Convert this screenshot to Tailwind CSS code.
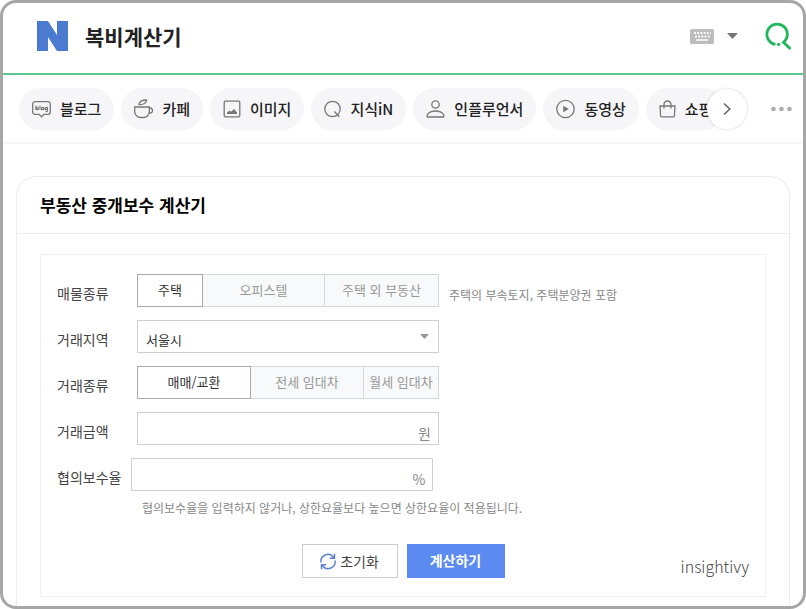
<!DOCTYPE html>
<html lang="ko">
<head>
    <meta charset="UTF-8">
    <meta name="viewport" content="width=device-width, initial-scale=1.0">
    <title>복비계산기</title>
    <script src="https://cdn.jsdelivr.net/npm/@tailwindcss/browser@4"></script>
</head>
<body class="bg-white font-['Noto_Sans_CJK_KR',sans-serif]">
    <div class="min-h-screen flex flex-col border-3 border-[#a6a6a6] rounded-2xl overflow-hidden">
        <!-- Search header -->
        <header class="flex items-center h-18 pb-1 pl-[34px] pr-[11px] border-b-2 border-[#5cc58c]">
            <svg class="w-[31px] h-[30px]" viewBox="0 0 31 30" fill="#4a7bd0" aria-hidden="true">
                <path d="M0 0h11l9 14V0h11v30H20L11 16v14H0z"/>
            </svg>
            <h1 class="ml-[17px] text-[21px] leading-8 font-bold text-[#222]">복비계산기</h1>
            <button type="button" aria-label="키보드" class="ml-auto">
                <svg class="w-6 h-[15px]" viewBox="0 0 24 15" aria-hidden="true">
                    <rect width="24" height="15" rx="1.5" fill="#bdbdbd"/>
                    <path d="M4 4h17M5 7.500h15" stroke="#fff" stroke-width="1.800" stroke-dasharray="1.800 1.400"/>
                    <path d="M6 11h12" stroke="#fff" stroke-width="1.600"/>
                </svg>
            </button>
            <button type="button" aria-label="자동완성 펼치기" class="ml-[13px]">
                <svg class="w-[11px] h-[6px]" viewBox="0 0 11 6" fill="#757575" aria-hidden="true"><path d="M0 0h11L5.500 6z"/></svg>
            </button>
            <button type="button" aria-label="검색" class="ml-[27px]">
                <svg class="w-[27px] h-7" viewBox="0 0 27 28" fill="none" stroke="#1fb75c" stroke-width="2.800" aria-hidden="true">
                    <path d="M10.500 22.400A10.200 10.200 0 1 1 18.500 20.300L25.500 27"/>
                    <circle cx="13.700" cy="22.400" r="1.600" fill="#1fb75c" stroke="none"/>
                </svg>
            </button>
        </header>

        <!-- Category tabs -->
        <nav class="flex items-center pt-[13px] pb-3 pl-4 pr-[11px] border-b-2 border-[#f8f8f8]">
            <div class="relative flex-1 min-w-0">
                <div class="flex gap-[7px] overflow-hidden mr-5 text-[15px] leading-[42px] font-medium text-[#222] whitespace-nowrap">
                    <a href="#" class="shrink-0 flex items-center gap-[9px] px-[13px] rounded-full bg-[#f6f6f9]">
                        <svg class="w-[19px] h-5" viewBox="0 0 19 20" fill="none" stroke="#777" stroke-width="1.300" aria-hidden="true">
                            <path d="M3 2.700h13a2.300 2.300 0 0 1 2.300 2.300v8a2.300 2.300 0 0 1-2.300 2.300h-4L9.500 17.800 7 15.300H3A2.300 2.300 0 0 1 .7 13V5A2.300 2.300 0 0 1 3 2.700z"/>
                            <path d="M4 6.500v4.500M8 6.500v4.500M15.500 8v4q-.5 1.200-2 .6" stroke-width="1.100"/>
                            <circle cx="5.200" cy="9.500" r="1.200"/><circle cx="10.700" cy="9.500" r="1.200"/><circle cx="14.300" cy="9.500" r="1.200"/>
                        </svg>
                        블로그
                    </a>
                    <a href="#" class="shrink-0 flex items-center gap-[9px] px-[13px] rounded-full bg-[#f6f6f9]">
                        <svg class="w-[19px] h-5" viewBox="0 0 19 20" fill="none" stroke="#777" stroke-width="1.300" aria-hidden="true">
                            <path d="M.7 8h14.600v4.500a6 6 0 0 1-6 6H6.700a6 6 0 0 1-6-6z"/>
                            <path d="M15.300 9h.7a2.300 2.300 0 0 1 0 5h-.9M5 5.500C5 2.500 8 1 12.500 1 12.500 4 10 5.800 5 5.500z"/>
                        </svg>
                        카페
                    </a>
                    <a href="#" class="shrink-0 flex items-center gap-[9px] px-[13px] rounded-full bg-[#f6f6f9]">
                        <svg class="w-[18px] h-5" viewBox="0 0 18 20" fill="none" stroke="#777" stroke-width="1.300" aria-hidden="true">
                            <rect x="1.200" y="2.200" width="15.600" height="15.600" rx="1"/>
                            <path d="M4 15v-1.500L6.500 11.500l1.500 1.300L11 10l3 3.500V15z" fill="#777" stroke="none"/>
                        </svg>
                        이미지
                    </a>
                    <a href="#" class="shrink-0 flex items-center gap-[9px] px-[13px] rounded-full bg-[#f6f6f9]">
                        <svg class="w-[17px] h-5" viewBox="0 0 17 20" fill="none" stroke="#777" stroke-width="1.300" aria-hidden="true">
                            <circle cx="8.500" cy="10" r="7.700"/>
                            <path d="M10.500 12.500l4.800 5.200"/>
                        </svg>
                        지식iN
                    </a>
                    <a href="#" class="shrink-0 flex items-center gap-[9px] px-[13px] rounded-full bg-[#f6f6f9]">
                        <svg class="w-[19px] h-5" viewBox="0 0 19 20" fill="none" stroke="#777" stroke-width="1.300" aria-hidden="true">
                            <circle cx="9.500" cy="5.500" r="3.700"/>
                            <path d="M1.500 18C.9 18 1 16.500 1.500 15.500 3.300 12.800 6 12 9.500 12s6.200.8 8 3.500c.5 1 .6 2.500 0 2.500z"/>
                        </svg>
                        인플루언서
                    </a>
                    <a href="#" class="shrink-0 flex items-center gap-[9px] px-[13px] rounded-full bg-[#f6f6f9]">
                        <svg class="w-[19px] h-5" viewBox="0 0 19 20" fill="none" stroke="#777" stroke-width="1.300" aria-hidden="true">
                            <circle cx="9.500" cy="10" r="8.700"/>
                            <path d="M7.200 6.700v6.600L12.800 10z" fill="#777" stroke="none"/>
                        </svg>
                        동영상
                    </a>
                    <a href="#" class="shrink-0 flex items-center gap-[9px] px-[13px] rounded-full bg-[#f6f6f9]">
                        <svg class="w-[17px] h-5" viewBox="0 0 17 20" fill="none" stroke="#777" stroke-width="1.300" aria-hidden="true">
                            <path d="M1 7h15l-.6 10a1 1 0 0 1-1 .9H2.600a1 1 0 0 1-1-.9zM5 9.500V5.500a3.500 3.500 0 0 1 7 0v4"/>
                        </svg>
                        쇼핑
                    </a>
                </div>
                <button type="button" aria-label="다음" class="absolute right-0 top-px size-10 rounded-full bg-white shadow-[0_0_3px_rgba(0,0,0,0.2)] flex items-center justify-center">
                    <svg class="w-2 h-3.5" viewBox="0 0 8 14" fill="none" stroke="#666" stroke-width="1.600" aria-hidden="true"><path d="M1 1.500L6.800 7 1 12.500"/></svg>
                </button>
            </div>
            <button type="button" aria-label="더보기" class="ml-6">
                <svg class="w-[21px] h-1.5" viewBox="0 0 21 6" fill="#aaa" aria-hidden="true">
                    <circle cx="2.500" cy="3" r="2.300"/><circle cx="10.500" cy="3" r="2.300"/><circle cx="18.500" cy="3" r="2.300"/>
                </svg>
            </button>
        </nav>

        <!-- Calculator -->
        <main class="flex-1 flex flex-col mt-8 mx-[13px] border border-b-0 border-[#ececec] rounded-t-[20px]">
            <h2 class="px-[23px] py-4 border-b border-[#ececec] text-[17px] leading-6 font-bold text-black">부동산 중개보수 계산기</h2>
            <form class="mx-[23px] mt-5 mb-2 pt-[19px] pb-[18px] px-4 border border-[#f0f0f0] text-sm text-[#444]">
                <div class="flex flex-col gap-[13px]">
                    <div class="flex items-center">
                        <span id="kind" class="w-20 pt-1">매물종류</span>
                        <div role="group" aria-labelledby="kind" class="flex w-[302px] h-[33px] text-[13px] text-[#999]">
                            <button type="button" aria-pressed="true" class="w-[66px] border border-[#aaa] bg-white text-[#333]">주택</button>
                            <button type="button" class="w-[122px] border-y border-r border-[#d5d8da] bg-[#f7f9fa]">오피스텔</button>
                            <button type="button" class="flex-1 border-y border-r border-[#d5d8da] bg-[#f7f9fa]">주택 외 부동산</button>
                        </div>
                        <span class="ml-2.5 pt-2 text-xs text-[#888]">주택의 부속토지, 주택분양권 포함</span>
                    </div>
                    <div class="flex items-center">
                        <label for="region" class="w-20 pt-1">거래지역</label>
                        <div class="relative w-[302px] h-[33px]">
                            <select id="region" class="appearance-none w-full h-full pl-2 pt-2 border border-[#d0d0d0] bg-white text-[13px] text-[#333]">
                                <option>서울시</option>
                            </select>
                            <svg class="absolute right-2.5 top-3.5 w-[9px] h-[5px] pointer-events-none" viewBox="0 0 9 5" fill="#999" aria-hidden="true"><path d="M0 0h9L4.500 5z"/></svg>
                        </div>
                    </div>
                    <div class="flex items-center">
                        <span id="deal" class="w-20 pt-1">거래종류</span>
                        <div role="group" aria-labelledby="deal" class="flex w-[302px] h-[33px] text-[13px] text-[#999]">
                            <button type="button" aria-pressed="true" class="w-[114px] border border-[#aaa] bg-white text-[#333]">매매/교환</button>
                            <button type="button" class="w-[113px] border-y border-r border-[#d5d8da] bg-[#f7f9fa]">전세 임대차</button>
                            <button type="button" class="flex-1 border-y border-r border-[#d5d8da] bg-[#f7f9fa]">월세 임대차</button>
                        </div>
                    </div>
                    <div class="flex items-center">
                        <label for="price" class="w-20 pt-1">거래금액</label>
                        <div class="relative w-[302px] h-[33px]">
                            <input id="price" type="text" class="w-full h-full pl-2 pr-7 border border-[#d0d0d0]">
                            <span class="absolute right-2 bottom-0.5 text-[#888]">원</span>
                        </div>
                    </div>
                    <div class="flex items-center">
                        <label for="rate" class="pt-1 pr-2.5">협의보수율</label>
                        <div class="relative w-[302px] h-[33px]">
                            <input id="rate" type="text" class="w-full h-full pl-2 pr-7 border border-[#d0d0d0]">
                            <span class="absolute right-2 bottom-0.5 text-[#888]">%</span>
                        </div>
                    </div>
                </div>
                <p class="mt-[9px] ml-[85px] text-xs text-[#888]">협의보수율을 입력하지 않거나, 상한요율보다 높으면 상한요율이 적용됩니다.</p>
                <div class="mt-7 grid grid-cols-[1fr_auto_1fr] items-center">
                    <div class="col-start-2 flex gap-[9px]">
                        <button type="reset" class="flex items-center justify-center gap-1 w-24 h-[34px] border border-[#ccc] bg-white text-[#444]">
                            <svg class="w-4 h-[17px]" viewBox="0 0 16 17" fill="none" stroke="#5d82cf" stroke-width="1.500" aria-hidden="true">
                                <path d="M1 9.500A7 7 0 0 1 13.500 4.200M15 7.500A7 7 0 0 1 2.500 12.800M14.500.8v4.500h-4.700M1.500 16.200v-4.500h4.700"/>
                            </svg>
                            <span>초기화</span>
                        </button>
                        <button type="button" class="w-[98px] h-[34px] pb-0.5 bg-[#5b8bf0] font-bold text-white">계산하기</button>
                    </div>
                    <span class="justify-self-end pt-2.5 text-base leading-6 font-light text-[#444]">insightivy</span>
                </div>
            </form>
        </main>
    </div>
</body>
</html>
